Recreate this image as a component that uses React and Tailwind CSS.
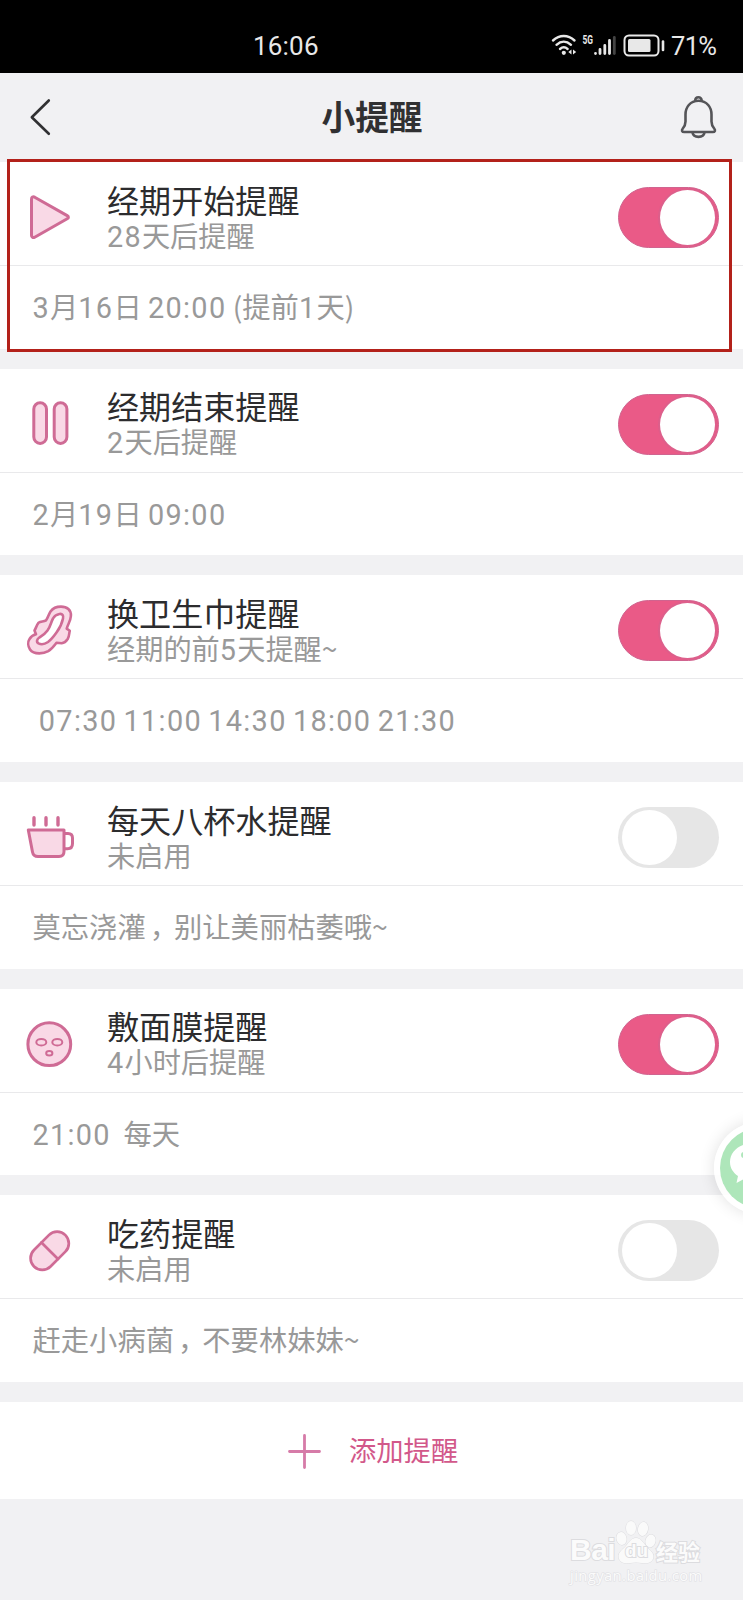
import React from "react";

const PINK = "#cf6b95";
const FILL = "#f9d9e6";

/* ── Reminder icons ── */
const Icon = ({ children }) => (
  <svg
    viewBox="0 0 52 52"
    className="mb-px size-[52px] shrink-0"
    fill={FILL}
    stroke={PINK}
    strokeWidth="3"
    strokeLinecap="round"
    strokeLinejoin="round"
  >
    {children}
  </svg>
);

const PlayIcon = () => (
  <Icon>
    <path d="M7.5 8.2c0-2 1.5-2.9 3.2-2L43.2 24.6c1.6.9 1.6 2.3 0 3.2L10.7 46.2c-1.7.9-3.2 0-3.2-2z" />
  </Icon>
);

const PauseIcon = () => (
  <Icon>
    <rect x="9.8" y="4.8" width="12.7" height="40.6" rx="6.3" />
    <rect x="30.2" y="4.8" width="12.7" height="40.6" rx="6.3" />
  </Icon>
);

const PadIcon = () => (
  <Icon>
    <path
      strokeWidth="2.6"
      d="M37 2.6C43 2.6 47.3 6 46.9 12C46.6 17 44 20 42.7 24.6L45.8 26.8C45 29 45.5 32 43.7 35C42 37.5 40 39 37.7 39.3L32.5 38.8C30 42 28 45 24.3 47.2C21 49 18 49.4 15.3 49.4C11 49.4 8 48.5 6 45.5C4 42.5 3.5 38 5.5 35C7 32.5 9.5 31 12 30.3L10.5 26.5C12 24 12.5 21.5 14.5 18.8C17 17 19.5 18 22 16.3C24 14 24.5 10.5 26.5 7.5C29 4 32.5 2.6 37 2.6Z"
    />
    <path
      strokeWidth="2.6"
      fill="#fff"
      d="M35.5 10C38.5 9.5 39.7 11.5 39 14.5C38 19.5 35.5 24.5 32.5 28.5C30 32 27.5 35.5 24 38C21.5 39.7 17.5 41 14.5 39.3C12 37.8 13 35 15.3 33.5C18 31.7 21 30 23.5 26.5C26.5 22.5 26.8 18.5 29 14.5C30.3 12 33 10.4 35.5 10Z"
    />
  </Icon>
);

const CupIcon = () => (
  <Icon>
    <path d="M10 6.8v7.2M22 6.8v7.2M34 6.8v7.2" strokeWidth="3.4" />
    <path d="M41 22.5h3c2.8 0 4.5 1.5 4.5 4.5v5.5c0 3.5-2 5.3-5 5.3h-2.5" fill="none" />
    <path d="M4.3 19H40v21.5c0 3.3-1.7 5-5 5H14c-3.3 0-4.9-1.2-5.5-4.5z" />
  </Icon>
);

const MaskIcon = () => (
  <Icon>
    <circle cx="25.3" cy="26.2" r="21.4" />
    <g strokeWidth="2">
      <ellipse cx="17.3" cy="24.2" rx="5" ry="3.3" />
      <ellipse cx="33.3" cy="24.2" rx="5" ry="3.3" />
      <ellipse cx="25.3" cy="35.2" rx="3.1" ry="2.3" />
    </g>
  </Icon>
);

const PillIcon = () => (
  <Icon>
    <g transform="rotate(-45 25.7 26.8)" strokeWidth="2.7">
      <rect x="3.5" y="15.1" width="44.4" height="23.4" rx="11.7" />
      <path d="M25.7 15.1v23.4" />
    </g>
  </Icon>
);

/* ── Digits are set in a wider face than the Chinese text, commas sit mid-cell ── */
const Mixed = ({ text }) =>
  text.split(/([\d:]+|，)/).map((part, i) => {
    if (/\d/.test(part)) {
      return (
        <span key={i} className="font-['Roboto','Noto_Sans_CJK_SC',sans-serif] text-[1.02em] tracking-[1.3px]">
          {part}
        </span>
      );
    }
    if (part === "，") {
      return (
        <span key={i} className="relative left-1">
          {part}
        </span>
      );
    }
    return part;
  });

const Toggle = ({ on }) =>
  on ? (
    <div className="flex h-[61px] w-[101px] shrink-0 items-center justify-end rounded-full border border-[#d0648f] bg-[#ea5a87] pr-[3px]">
      <div className="size-[55px] rounded-full bg-white shadow-[0_0_0_2px_#d0648f80]" />
    </div>
  ) : (
    <div className="flex h-[61px] w-[101px] shrink-0 items-center rounded-full bg-[#e6e6e6] pl-1">
      <div className="size-[55px] rounded-full bg-white" />
    </div>
  );

const Reminder = ({ icon: IconComp, title, sub, detail, on }) => (
  <section className="h-[186.7px] bg-white">
    <div className="flex h-[104px] items-center border-b border-[#e9e9eb] pt-2 pr-6 pl-6">
      <IconComp />
      <div className="ml-[31px] flex-1 pb-[2px] whitespace-pre">
        <h2 className="h-9 text-[32.1px] leading-9 font-normal text-[#2c2c2e]">{title}</h2>
        <p className="h-9 text-[28.2px] leading-9 text-[#999]">
          <Mixed text={sub} />
        </p>
      </div>
      <Toggle on={on} />
    </div>
    <div className="flex h-[82.7px] items-center pl-[32.5px] text-[28.3px] text-[#999]">
      <p className="h-[43px] leading-10 whitespace-pre">
        <Mixed text={detail} />
      </p>
    </div>
  </section>
);

const StatusBar = () => (
  <div className="flex h-[73px] items-center bg-black pt-[19px] font-['Roboto',sans-serif] text-[26px] text-[#e8e8e8]">
    <span className="ml-[253px] w-[298px] tracking-[0.2px]">16:06</span>
    <svg width="118" height="30" viewBox="0 0 118 30" fill="none" stroke="#e8e8e8">
      <g strokeWidth="2.4" strokeLinecap="round">
        <path d="M2 9.5c6.5-6 15-6 21.5 0M5.5 13.8c4.5-4 10-4 14.5 0M9 18c2.3-2 5.3-2 7.6 0" />
      </g>
      <circle cx="12.8" cy="21.8" r="2.1" fill="#e8e8e8" stroke="none" />
      <path d="M20.5 18.5v5l-3.2-2.5zM22 18.5v5l3.2-2.5z" fill="#e8e8e8" stroke="none" />
      <text x="31.5" y="13" fill="#e8e8e8" stroke="none" fontSize="13" fontWeight="700" textLength="10.5" lengthAdjust="spacingAndGlyphs">
        5G
      </text>
      <g strokeWidth="2.8" strokeLinecap="round">
        <path d="M44.5 22.5v.1M49 18.5v4M53.8 14.5v8M58.5 9.5v13" />
        <path d="M63.3 6.5v16" stroke="#444" />
      </g>
      <rect x="73.5" y="4.5" width="34" height="20" rx="4.5" strokeWidth="2" />
      <rect x="77" y="8" width="22.5" height="13" rx="1.5" fill="#e8e8e8" stroke="none" />
      <path d="M112 10.5v8.5" strokeWidth="2.6" strokeLinecap="round" />
    </svg>
    <span className="ml-[2px] text-[25.5px] tracking-[-0.7px]">71%</span>
  </div>
);

const Header = () => (
  <header className="flex h-[89px] items-center justify-between pr-[26px] pb-[2px] pl-[29px] text-[#303032]">
    <svg width="36" height="38" viewBox="0 0 36 38" fill="none" stroke="#303032" strokeWidth="2.6" strokeLinecap="round" strokeLinejoin="round">
      <path d="M19.8 2.5L2.8 19.2L19.8 35.8" />
    </svg>
    <h1 className="-ml-px pb-px text-[33.7px] leading-[48px] font-bold">小提醒</h1>
    <svg width="37" height="44" viewBox="0 0 37 44" fill="none" stroke="#555558" strokeWidth="2.6" strokeLinejoin="round">
      <path d="M15.2 5.8C15.2 1 21.7 1 21.7 5.8" />
      <path d="M18.5 5.8C10 5.8 5.5 12.5 5.5 19.5V26.5C5.5 30 4.5 31.5 2.8 33.5C1.3 35.3 2 37 4.2 37H32.8C35 37 35.7 35.3 34.2 33.5C32.5 31.5 31.5 30 31.5 26.5V19.5C31.5 12.5 27 5.8 18.5 5.8Z" />
      <path d="M12.5 37.5C13.5 43.3 23.5 43.3 24.5 37.5" />
    </svg>
  </header>
);

const ChatBubble = () => (
  <div className="absolute top-[1122px] left-[714px] flex size-[92px] items-center justify-center rounded-full bg-white/85 shadow-[0_0_16px_rgba(0,0,0,0.12)]">
    <svg viewBox="0 0 80 80" className="size-20">
      <circle cx="40" cy="40" r="40" fill="#aee6ba" />
      <path
        d="M34 15C20 15 10 23 10 34C10 40 13 44.5 18 48L16.5 55L25 50.5C46 53 58 45 58 34C58 23 48 15 34 15Z"
        fill="#fff"
      />
      <circle cx="24" cy="27" r="3" fill="#aee6ba" />
    </svg>
  </div>
);

const Watermark = () => (
  <div className="absolute top-[1519px] left-[570px] w-[140px] text-[#fbfbfb]">
    <div className="flex h-[46px] items-end font-bold [paint-order:stroke] [-webkit-text-stroke:2px_#dcdcdf]">
      <span className="w-[46px] font-['Liberation_Sans',sans-serif] text-[30px] leading-[30px] tracking-[-0.5px]">Bai</span>
      <span className="relative h-[46px] w-[40px]">
        <svg viewBox="0 0 40 46" className="absolute inset-0" fill="#fafafa" stroke="#dcdcdf" strokeWidth="1">
          <ellipse cx="5.5" cy="19.5" rx="5" ry="6.5" transform="rotate(-12 5.5 19.5)" />
          <ellipse cx="15" cy="9" rx="5" ry="7" />
          <ellipse cx="27" cy="10" rx="5" ry="7" transform="rotate(10 27 10)" />
          <ellipse cx="34.5" cy="22" rx="5" ry="6.5" transform="rotate(15 34.5 22)" />
          <path d="M20 19C15 19 12.5 24 9.5 27.5C6 31 2.5 33 2.5 38C3 43.5 9 45 14 44C18 43.2 22 43.2 26 44C31 45 37 43.5 37.5 38C37.5 33 33.5 31 30.5 27.5C27.5 24 25 19 20 19Z" />
        </svg>
        <span className="absolute top-[20px] left-[9px] font-['Liberation_Sans',sans-serif] text-[19px] leading-6">du</span>
      </span>
      <span className="pb-[2px] text-[22px] leading-[26px]">经验</span>
    </div>
    <p className="font-['Open_Sans',sans-serif] text-[14.8px] leading-5 tracking-[0.4px] [paint-order:stroke] [-webkit-text-stroke:1.2px_#e0e0e3]">
      jingyan.baidu.com
    </p>
  </div>
);

/* ── Main Component ── */
export default function App() {
  const reminders = [
    { icon: PlayIcon, title: "经期开始提醒", sub: "28天后提醒", detail: "3月16日 20:00 (提前1天)", on: true },
    { icon: PauseIcon, title: "经期结束提醒", sub: "2天后提醒", detail: "2月19日 09:00", on: true },
    { icon: PadIcon, title: "换卫生巾提醒", sub: "经期的前5天提醒~", detail: " 07:30 11:00 14:30 18:00 21:30", on: true },
    { icon: CupIcon, title: "每天八杯水提醒", sub: "未启用", detail: "莫忘浇灌，别让美丽枯萎哦~", on: false },
    { icon: MaskIcon, title: "敷面膜提醒", sub: "4小时后提醒", detail: "21:00  每天", on: true },
    { icon: PillIcon, title: "吃药提醒", sub: "未启用", detail: "赶走小病菌，不要林妹妹~", on: false },
  ];

  return (
    <div className="relative h-[1600px] w-[743px] overflow-hidden bg-[#f1f1f3] font-['Noto_Sans_CJK_SC',sans-serif]">
      <StatusBar />
      <Header />
      <main className="flex flex-col gap-5">
        {reminders.map((item) => (
          <Reminder key={item.title} {...item} />
        ))}
        <button className="flex h-[97px] items-center bg-white pl-[288px] text-[27.3px] text-[#d2588a]">
          <svg width="33" height="36" viewBox="0 0 33 36" stroke="#d67ba8" strokeWidth="2.8" strokeLinecap="round">
            <path d="M1.5 18.5H31.5M16.5 2.5V34.5" />
          </svg>
          <span className="ml-[28px] pb-[3px]">添加提醒</span>
        </button>
      </main>
      <div className="absolute top-[159px] left-[7px] h-[193px] w-[725px] border-[3px] border-[#b3211a]" />
      <ChatBubble />
      <Watermark />
    </div>
  );
}
